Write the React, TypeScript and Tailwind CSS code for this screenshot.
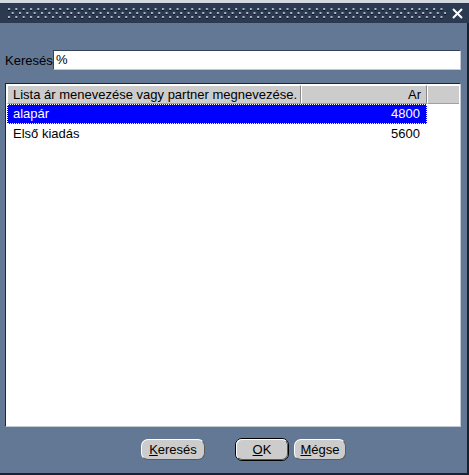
import React from "react";

function TitleDots() {
  return (
    <svg width="438" height="12" className="block">
      <defs>
        <pattern id="dots" patternUnits="userSpaceOnUse" width="7.33" height="8">
          <rect x="0" y="0" width="2" height="2" fill="#aab6c8" />
          <rect x="0" y="2" width="2" height="1" fill="#0c1420" />
          <rect x="3.67" y="4" width="2" height="2" fill="#aab6c8" />
          <rect x="3.67" y="6" width="2" height="1" fill="#0c1420" />
        </pattern>
      </defs>
      <rect x="0" y="0" width="438" height="12" fill="url(#dots)" />
    </svg>
  );
}

function CloseX() {
  return (
    <svg width="11" height="11" viewBox="0 0 11 11" className="block">
      <path d="M1 1 L10 10 M10 1 L1 10" stroke="#ffffff" strokeWidth="2" />
    </svg>
  );
}

export default function App() {
  return (
    <div
      className="w-[469px] h-[475px] bg-[#637894] flex flex-col text-[13px] text-black overflow-hidden"
      style={{ fontFamily: '"Liberation Sans", Arial, sans-serif' }}
    >
      <div className="h-[3px] bg-[#d4d8e0] shrink-0" />
      <div className="h-[20px] bg-[#2b3a51] flex items-start shrink-0 pl-[8px] pr-[6px]">
        <div className="mt-[5px]">
          <TitleDots />
        </div>
        <div className="ml-auto mt-[5px]">
          <CloseX />
        </div>
      </div>
      <div className="flex-1 flex flex-col border-r-2 border-b-2 border-r-[#1a2230] border-b-[#1a2230]">
        <div className="flex items-center mt-[27px] pl-[5px] pr-[6px] h-[20px]">
          <span className="leading-none w-[48px]">Keresés</span>
          <div className="flex-1 h-[20px] bg-white border border-t-[#34425a] border-l-[#34425a] border-b-[#c4cad4] border-r-[#c4cad4] flex items-center pl-[2px]">
            %
          </div>
        </div>
        <div className="mt-[13px] mx-[5px] mr-[6px] h-[344px] bg-white border border-t-[#1c2636] border-l-[#1c2636] border-b-[#c4cad4] border-r-[#c4cad4] pt-[1px] pl-[1px] pr-[1px] flex flex-col">
          <div className="flex h-[19px] shrink-0 bg-[#cccccc]">
            <div className="w-[294px] border-t border-l border-r border-t-white border-l-white border-r-[#888888] border-b border-b-[#a0a0a0] flex items-center pl-[5px]">
              Lista ár menevezése vagy partner megnevezése.
            </div>
            <div className="w-[126px] border-t border-l border-r border-t-white border-l-white border-r-[#888888] border-b border-b-[#a0a0a0] flex items-center justify-end pr-[5px]">
              Ar
            </div>
            <div className="flex-1 border-t border-l border-t-white border-l-white border-b border-b-[#a0a0a0]" />
          </div>
          <div className="w-[420px] h-[20px] bg-[#0000ff] text-white flex items-center justify-between pl-[5px] pr-[6px] border border-dotted border-white">
            <span>alapár</span>
            <span>4800</span>
          </div>
          <div className="w-[420px] h-[20px] flex items-center justify-between pl-[6px] pr-[7px]">
            <span>Első kiadás</span>
            <span>5600</span>
          </div>
        </div>
        <div className="flex items-center mt-[11px] pl-[141px]">
          <button className="w-[64px] h-[21px] rounded-[7px] bg-[#cccccc] border border-t-white border-l-white border-b-[#5a5a5a] border-r-[#5a5a5a] flex items-center justify-center leading-none">
            <span><span className="underline">K</span>eresés</span>
          </button>
          <button className="ml-[30px] w-[54px] h-[23px] rounded-[7px] bg-[#cccccc] border border-black flex items-center justify-center leading-none">
            <span className="w-full h-full rounded-[6px] border border-t-white border-l-white border-b-[#5a5a5a] border-r-[#5a5a5a] flex items-center justify-center">
              <span><span className="underline">O</span>K</span>
            </span>
          </button>
          <button className="ml-[5px] w-[52px] h-[21px] rounded-[7px] bg-[#cccccc] border border-t-white border-l-white border-b-[#5a5a5a] border-r-[#5a5a5a] flex items-center justify-center leading-none">
            <span><span className="underline">M</span>égse</span>
          </button>
        </div>
      </div>
    </div>
  );
}
